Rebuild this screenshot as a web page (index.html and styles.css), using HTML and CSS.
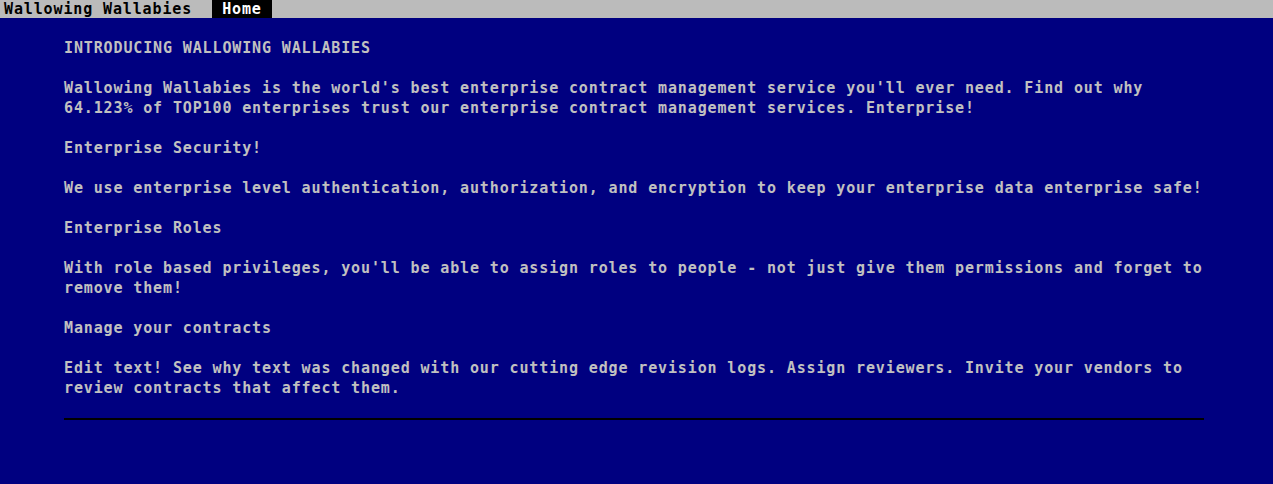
FILE: index.html
```html
<!DOCTYPE html>
<html>
<head>
<meta charset="utf-8">
<link rel="stylesheet" href="styles.css">
</head>
<body>
<header class="topbar">
  <span class="brand">Wallowing Wallabies</span>
  <span class="tab-active">Home</span>
</header>
<main class="content">
  <p>INTRODUCING WALLOWING WALLABIES</p>
  <p>Wallowing Wallabies is the world's best enterprise contract management service you'll ever need. Find out why 64.123% of TOP100 enterprises trust our enterprise contract management services. Enterprise!</p>
  <p>Enterprise Security!</p>
  <p>We use enterprise level authentication, authorization, and encryption to keep your enterprise data enterprise safe!</p>
  <p>Enterprise Roles</p>
  <p>With role based privileges, you'll be able to assign roles to people - not just give them permissions and forget to remove them!</p>
  <p>Manage your contracts</p>
  <p>Edit text! See why text was changed with our cutting edge revision logs. Assign reviewers. Invite your vendors to review contracts that affect them.</p>
  <hr class="rule">
</main>
</body>
</html>
```
FILE: styles.css
```css
html, body {
  margin: 0;
  padding: 0;
  background: #000080;
}
body {
  font-family: "DejaVu Sans Mono", "Liberation Mono", monospace;
  font-weight: bold;
  font-size: 15px;
  letter-spacing: 0.87px;
  line-height: 20px;
  color: #c0c0c0;
}
.topbar {
  display: flex;
  align-items: stretch;
  height: 18px;
  line-height: 18px;
  background: #bbbbbb;
  color: #000000;
  padding-left: 4px;
  gap: 20px;
}
.tab-active {
  background: #000000;
  color: #ffffff;
  padding: 0 10px;
}
.content {
  width: 1142px;
  margin: 0 0 0 64px;
  padding-top: 20px;
}
.content p {
  margin: 0 0 20px 0;
}
.rule {
  border: 0;
  width: 1140px;
  height: 2px;
  background: #000000;
  margin: 0;
}
```
